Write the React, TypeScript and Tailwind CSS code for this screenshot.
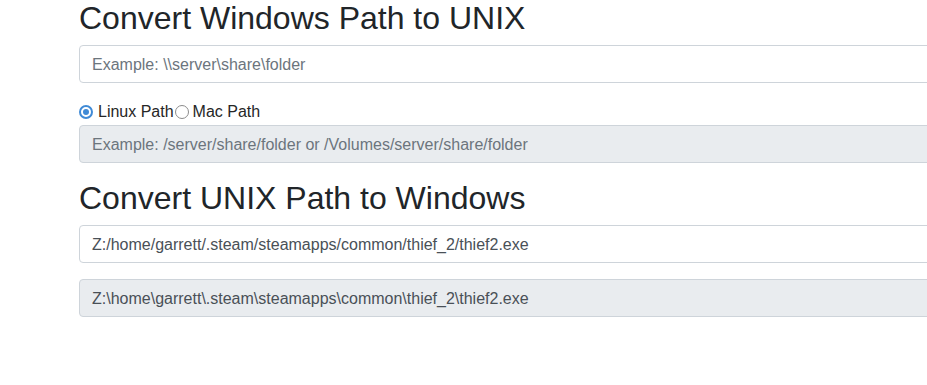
import React, { useState } from "react";

const Radio: React.FC<{ checked: boolean; label: string; onClick: () => void }> = ({ checked, label, onClick }) => (
  <label className="flex items-center cursor-pointer" onClick={onClick}>
    {checked ? (
      <span className="flex items-center justify-center w-[14px] h-[14px] mr-[5px] rounded-full border-[2px] border-[#3f8ad6] bg-white">
        <span className="block w-[6px] h-[6px] rounded-full bg-[#3f8ad6]" />
      </span>
    ) : (
      <span className="block w-[14px] h-[14px] mr-[4px] rounded-full border-[1.5px] border-[#8c8c8c] bg-white" />
    )}
    {label}
  </label>
);

const App: React.FC = () => {
  const [target, setTarget] = useState("linux");

  return (
    <div className="w-screen h-[385px] overflow-hidden bg-white font-['Liberation_Sans',Arial,sans-serif] text-[#212529]">
      <div className="ml-[79px] w-[900px]">
        {/* Windows -> UNIX */}
        <h2 className="mt-[-1px] mb-2 text-[32px] leading-[38px] font-normal">Convert Windows Path to UNIX</h2>
        <div className="mb-4">
          <input
            type="text"
            placeholder="Example: \\server\share\folder"
            className="block w-full h-[38px] px-3 pt-[2px] text-base text-[#495057] placeholder:text-[#6c757d] bg-white border border-[#ced4da] rounded outline-none"
          />
        </div>

        <div className="flex items-center h-6 text-base text-[#262626] pt-[1px]">
          <Radio checked={target === "linux"} label="Linux Path" onClick={() => setTarget("linux")} />
          <span className="w-[1px]" />
          <Radio checked={target === "mac"} label="Mac Path" onClick={() => setTarget("mac")} />
        </div>
        <div className="mt-[2px] mb-4">
          <input
            type="text"
            readOnly
            placeholder="Example: /server/share/folder or /Volumes/server/share/folder"
            className="block w-full h-[38px] px-3 pt-[2px] text-base text-[#495057] placeholder:text-[#6c757d] bg-[#e9ecef] border border-[#ced4da] rounded outline-none"
          />
        </div>

        {/* UNIX -> Windows */}
        <h2 className="mb-2 text-[32px] leading-[38px] font-normal">Convert UNIX Path to Windows</h2>
        <div className="mb-4">
          <input
            type="text"
            defaultValue="Z:/home/garrett/.steam/steamapps/common/thief_2/thief2.exe"
            className="block w-full h-[38px] px-3 pt-[2px] text-base text-[#495057] bg-white border border-[#ced4da] rounded outline-none"
          />
        </div>
        <div className="mb-4">
          <input
            type="text"
            readOnly
            value="Z:\home\garrett\.steam\steamapps\common\thief_2\thief2.exe"
            className="block w-full h-[38px] px-3 pt-[2px] text-base text-[#495057] bg-[#e9ecef] border border-[#ced4da] rounded outline-none"
          />
        </div>
      </div>
    </div>
  );
};

export default App;
